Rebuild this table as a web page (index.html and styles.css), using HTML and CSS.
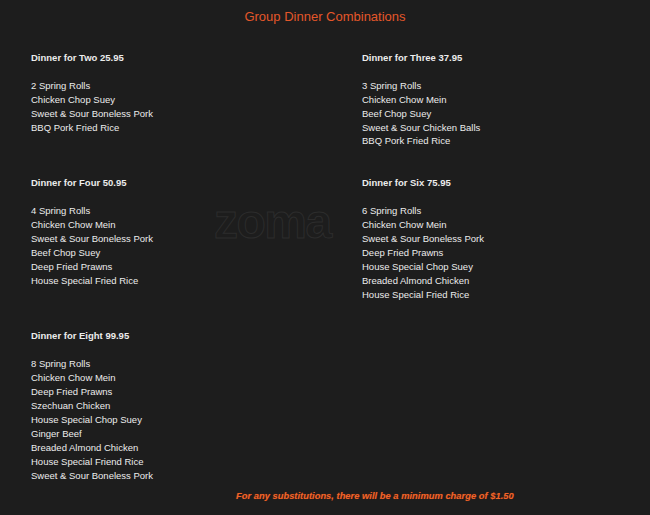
FILE: index.html
```html
<!DOCTYPE html>
<html>
<head>
<meta charset="utf-8">
<link rel="stylesheet" href="styles.css">
</head>
<body>
<div class="page">
  <h1 class="title">Group Dinner Combinations</h1>
  <div class="grid">
    <div class="block">
      <div class="head">Dinner for Two 25.95</div>
      <div>2 Spring Rolls</div>
      <div>Chicken Chop Suey</div>
      <div>Sweet &amp; Sour Boneless Pork</div>
      <div>BBQ Pork Fried Rice</div>
    </div>
    <div class="block">
      <div class="head">Dinner for Three 37.95</div>
      <div>3 Spring Rolls</div>
      <div>Chicken Chow Mein</div>
      <div>Beef Chop Suey</div>
      <div>Sweet &amp; Sour Chicken Balls</div>
      <div>BBQ Pork Fried Rice</div>
    </div>
    <div class="block">
      <div class="head">Dinner for Four 50.95</div>
      <div>4 Spring Rolls</div>
      <div>Chicken Chow Mein</div>
      <div>Sweet &amp; Sour Boneless Pork</div>
      <div>Beef Chop Suey</div>
      <div>Deep Fried Prawns</div>
      <div>House Special Fried Rice</div>
    </div>
    <div class="block">
      <div class="head">Dinner for Six 75.95</div>
      <div>6 Spring Rolls</div>
      <div>Chicken Chow Mein</div>
      <div>Sweet &amp; Sour Boneless Pork</div>
      <div>Deep Fried Prawns</div>
      <div>House Special Chop Suey</div>
      <div>Breaded Almond Chicken</div>
      <div>House Special Fried Rice</div>
    </div>
    <div class="block">
      <div class="head">Dinner for Eight 99.95</div>
      <div>8 Spring Rolls</div>
      <div>Chicken Chow Mein</div>
      <div>Deep Fried Prawns</div>
      <div>Szechuan Chicken</div>
      <div>House Special Chop Suey</div>
      <div>Ginger Beef</div>
      <div>Breaded Almond Chicken</div>
      <div>House Special Friend Rice</div>
      <div>Sweet &amp; Sour Boneless Pork</div>
    </div>
  </div>
  <p class="footer">For any substitutions, there will be a minimum charge of $1.50</p>
  <div class="watermark">zoma</div>
</div>
</body>
</html>
```
FILE: styles.css
```css
html, body {
  margin: 0;
  padding: 0;
  background: #1d1d1d;
}
.page {
  position: relative;
  width: 650px;
  height: 515px;
  padding-top: 9px;
  box-sizing: border-box;
  font-family: "Liberation Sans", Arial, sans-serif;
  color: #ececec;
  font-size: 9.5px;
  line-height: 13.9px;
  overflow: hidden;
}
.title {
  margin: 0;
  text-align: center;
  font-weight: normal;
  font-size: 13px;
  line-height: 16px;
  color: #e4572a;
}
.grid {
  display: grid;
  grid-template-columns: 331px 1fr;
  row-gap: 28px;
  padding-left: 31px;
  margin-top: 26px;
}
.head {
  font-weight: bold;
  margin-bottom: 13.9px;
}
.footer {
  margin: 6.5px 0 0 236px;
  font-weight: bold;
  font-style: italic;
  font-size: 9.4px;
  color: #f0642a;
  text-shadow: 0 0 1px #7a2a10;
}
.watermark {
  position: absolute;
  left: 214px;
  top: 194px;
  font-family: "Liberation Sans", Arial, sans-serif;
  font-size: 48px;
  line-height: 56px;
  font-weight: bold;
  color: #1d1d1d;
  -webkit-text-stroke: 1px #2c2c2c;
  letter-spacing: -1.5px;
}
```
